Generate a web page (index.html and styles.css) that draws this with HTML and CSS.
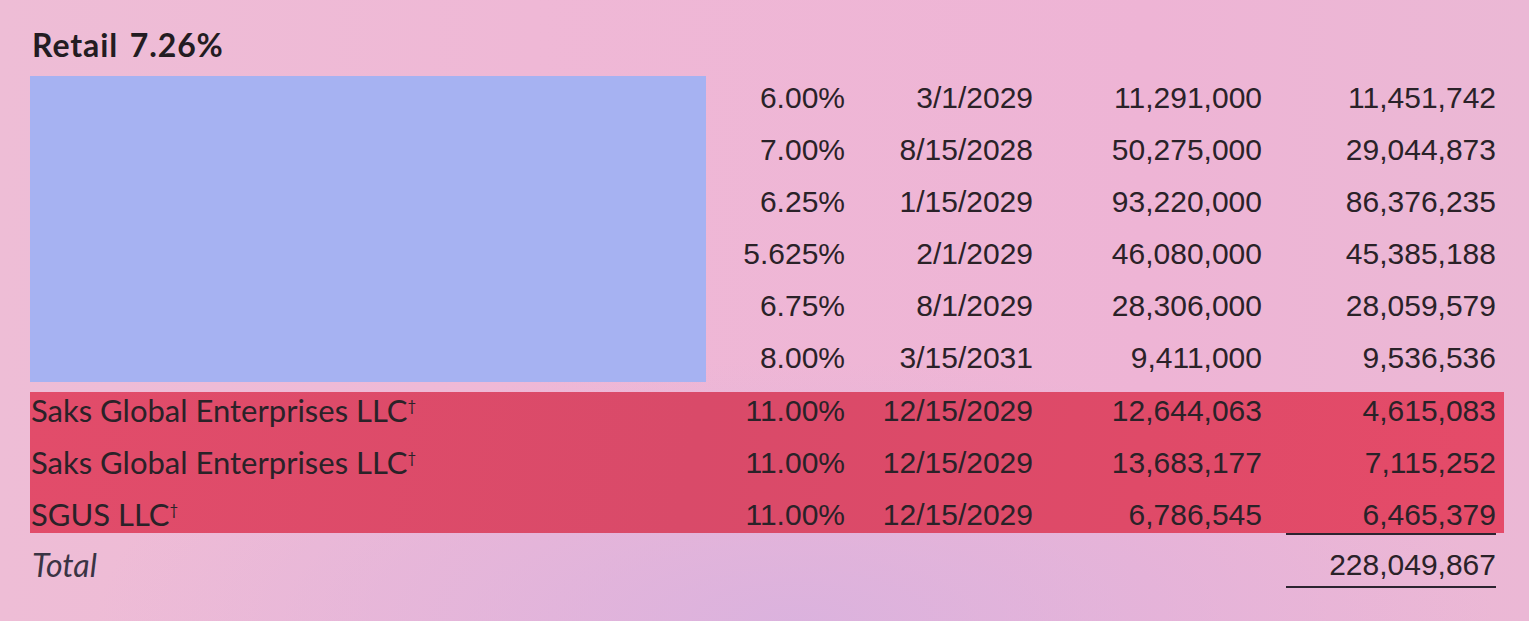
FILE: index.html
```html
<!DOCTYPE html>
<html lang="en">
<head>
<meta charset="utf-8">
<title>Retail holdings</title>
<link rel="stylesheet" href="styles.css">
</head>
<body>
<main class="holdings">
  <h2 class="sector">Retail 7.26%</h2>

  <section class="group">
    <div class="redacted"></div>
    <div class="num rate">6.00%</div><div class="num date">3/1/2029</div><div class="num par">11,291,000</div><div class="num val">11,451,742</div>
    <div class="num rate">7.00%</div><div class="num date">8/15/2028</div><div class="num par">50,275,000</div><div class="num val">29,044,873</div>
    <div class="num rate">6.25%</div><div class="num date">1/15/2029</div><div class="num par">93,220,000</div><div class="num val">86,376,235</div>
    <div class="num rate">5.625%</div><div class="num date">2/1/2029</div><div class="num par">46,080,000</div><div class="num val">45,385,188</div>
    <div class="num rate">6.75%</div><div class="num date">8/1/2029</div><div class="num par">28,306,000</div><div class="num val">28,059,579</div>
    <div class="num rate">8.00%</div><div class="num date">3/15/2031</div><div class="num par">9,411,000</div><div class="num val">9,536,536</div>
  </section>

  <section class="group band">
    <div class="name">Saks Global Enterprises LLC<span class="dag">†</span></div><div class="num rate">11.00%</div><div class="num date">12/15/2029</div><div class="num par">12,644,063</div><div class="num val">4,615,083</div>
    <div class="name">Saks Global Enterprises LLC<span class="dag">†</span></div><div class="num rate">11.00%</div><div class="num date">12/15/2029</div><div class="num par">13,683,177</div><div class="num val">7,115,252</div>
    <div class="name">SGUS LLC<span class="dag">†</span></div><div class="num rate">11.00%</div><div class="num date">12/15/2029</div><div class="num par">6,786,545</div><div class="num val underline last">6,465,379</div>
  </section>

  <section class="group total">
    <div class="name total-label">Total</div><div></div><div></div><div></div><div class="num val underline">228,049,867</div>
  </section>
</main>
</body>
</html>
```

FILE: styles.css
```css
html, body {
  margin: 0;
  padding: 0;
}

body {
  width: 1529px;
  height: 621px;
  overflow: hidden;
  color: #2a2228;
  background:
    radial-gradient(ellipse 700px 260px at 52% 100%, rgba(218, 178, 222, 0.95), rgba(218, 178, 222, 0) 100%),
    linear-gradient(90deg, #eebdd6 0%, #efb8d6 35%, #eeb4d5 75%, #ebb8d5 100%);
  font-family: "Lato", "Liberation Sans", sans-serif;
}

.holdings {
  padding: 24px 0 0 30px;
  display: flex;
  flex-direction: column;
}

.sector {
  margin: 0 0 14px 2px;
  font-family: "Lato", "Liberation Sans", sans-serif;
  font-weight: 700;
  font-size: 32px;
  letter-spacing: 0.9px;
  word-spacing: 3px;
  line-height: 41px;
  color: #231c22;
}

.group {
  display: grid;
  grid-template-columns: 676px 139px 188px 229px 234px;
  grid-auto-rows: 37px;
  row-gap: 15px;
  width: 1466px;
}

.redacted {
  grid-column: 1;
  grid-row: 1 / span 6;
  margin: -3px 0 -6px;
  background: #a6b2f2;
}

.band {
  margin-top: 16px;
  width: 1474px;
  padding-right: 8px;
  box-sizing: border-box;
  background: linear-gradient(100deg, #e24c6a 0%, #d94a69 45%, #df4a68 75%, #e54b69 100%);
}

.total {
  margin-top: 13px;
  grid-auto-rows: 42px;
}

.num {
  font-family: "Liberation Sans", Arial, sans-serif;
  font-size: 30px;
  line-height: 37px;
  text-align: right;
  white-space: nowrap;
}

.name {
  font-family: "Lato", "Liberation Sans", sans-serif;
  font-size: 31px;
  line-height: 37px;
  white-space: nowrap;
  padding-left: 1px;
}

.dag {
  font-size: 15px;
  vertical-align: 11px;
  line-height: 0;
  margin-left: 0;
}

.val {
  justify-self: end;
  width: 210px;
}

.underline {
  border-bottom: 2px solid #2c2430;
}

.last {
  margin-bottom: -2px;
}

.total-label {
  font-style: italic;
  font-weight: 400;
  font-size: 32px;
  color: #3a3444;
  padding-left: 2px;
}
```
